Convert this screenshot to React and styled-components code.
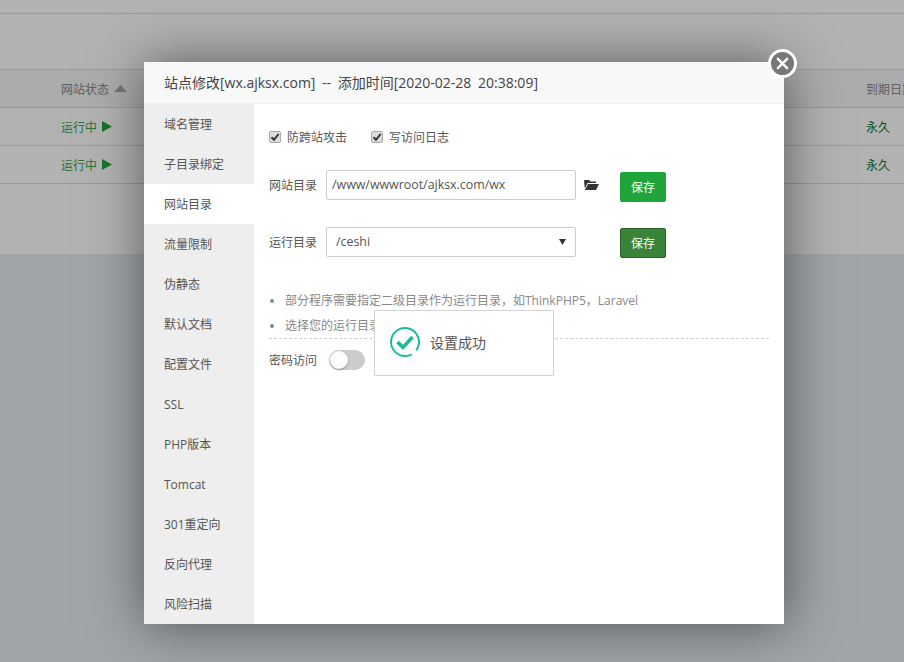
import React from "react";
import styled, { createGlobalStyle } from "styled-components";

const FONT = `"Open Sans", "Noto Sans CJK SC", sans-serif`;

const Global = createGlobalStyle`
  html, body { margin: 0; padding: 0; height: 100%; overflow: hidden; }
  body { font-family: ${FONT}; font-size: 12px; color: #555; background: #f0f0f0; }
  * { box-sizing: border-box; }
`;

const Page = styled.div`width: 904px; height: 662px; position: relative; overflow: hidden; background: #e7edf1;`;
const Panel = styled.div`height: 254px; background: #fff; padding-top: 13px;`;
const TopRule = styled.div`height: 56px; border-top: 1px solid #ddd;`;
const Row = styled.div`
  height: 38px; border-top: 1px solid #ddd; display: flex; align-items: center; justify-content: space-between;
  padding-left: 61px; background: ${p => (p.$head ? "#f5f6fa" : "#fff")}; color: ${p => (p.$head ? "#888" : "#555")};
  &:last-of-type { border-bottom: 1px solid #ddd; height: 39px; }
`;
const Tail = styled.span`width: 38px; white-space: nowrap; color: ${p => p.$c || "inherit"};`;
const Status = styled.span`color: ${p => (p.$head ? "#888" : "#38a64c")}; display: inline-flex; align-items: center; gap: 5px;`;
const Triangle = styled.svg`display: block;`;
const Overlay = styled.div`position: absolute; inset: 0; background: rgba(0, 0, 0, 0.3);`;

const Modal = styled.div`
  position: absolute; left: 144px; top: 62px; width: 640px; height: 562px; background: #fff;
  box-shadow: 1px 1px 50px rgba(0, 0, 0, 0.5); display: flex; flex-direction: column;
`;
const Header = styled.div`
  height: 42px; flex: none; background: #f8f8f8; border-bottom: 1px solid #eee; padding: 0 20px;
  font-size: 14px; line-height: 42px; color: #444; white-space: nowrap; word-spacing: 3px;
`;
const Close = styled.button`
  position: absolute; right: -13px; top: -13px; width: 29px; height: 29px; padding: 0; border-radius: 50%;
  border: 3px solid #fff; background: #777; display: flex; align-items: center; justify-content: center;
`;
const Body = styled.div`flex: 1; display: flex; min-height: 0;`;
const Side = styled.nav`width: 110px; flex: none; background: #eee; overflow: hidden;`;
const Tab = styled.div`
  height: 40px; line-height: 42px; padding-left: 20px; color: #555; font-size: 12px;
  background: ${p => (p.$active ? "#fff" : "transparent")};
`;
const Content = styled.div`flex: 1; padding: 25px 15px 0; position: relative;`;
const Checks = styled.div`display: flex; gap: 24px; height: 16px; align-items: center;`;
const Check = styled.label`display: inline-flex; align-items: center; gap: 6px; color: #555;`;
const Box = styled.span`
  width: 12px; height: 12px; border-radius: 2px; background: #ddd; border: 1px solid #aaa;
  display: inline-flex; align-items: center; justify-content: center;
`;
const Line = styled.div`display: flex; align-items: flex-start; height: 30px; margin-top: ${p => p.$mt}px;`;
const Label = styled.span`width: 57px; flex: none; color: #555; line-height: 31px;`;
const Field = styled.div`
  width: 250px; height: 30px; border: 1px solid #ccc; border-radius: 2px; background: #fff;
  display: flex; align-items: center; justify-content: space-between; padding: ${p => (p.$select ? "0 9px 0 9px" : "0 5px")};
  color: #555; font-size: 12.4px; line-height: ${p => (p.$select ? 30 : 28)}px;
`;
const Folder = styled.svg`margin: 9px 0 0 8px; width: 15px; height: 12px; flex: none;`;
const Save = styled.button`
  margin: ${p => p.$top}px 0 0 ${p => p.$ml}px; width: 46px; height: 30px; border-radius: 2px; padding: 0;
  border: 1px solid ${p => (p.$dark ? "#2a5f2a" : "#20a53a")}; background: ${p => (p.$dark ? "#398439" : "#20a53a")};
  color: #fff; font: 12px ${FONT};
`;
const Notes = styled.ul`
  margin: 31px 0 0; padding: 0 0 0 16px; list-style: disc; color: #888; border-bottom: 1px dashed #ccc;
  li { height: 25px; line-height: 25px; white-space: nowrap; }
  li:first-child { line-height: 26px; }
  li::marker { color: #888; }
`;
const SwitchRow = styled.div`display: flex; align-items: center; height: 20px; margin-top: 11px; gap: 12px;`;
const Switch = styled.span`
  width: 36px; height: 20px; border-radius: 10px; background: #ccc; position: relative; display: block;
  &::before { content: ""; position: absolute; left: 1px; top: 1px; width: 18px; height: 18px; border-radius: 50%; background: #fff; box-shadow: 0 1px 2px rgba(0,0,0,.35); }
`;
const Toast = styled.div`
  position: absolute; left: 120px; top: 206px; width: 180px; height: 66px; background: #fff; border: 1px solid #d3d3d3;
  display: flex; align-items: center; gap: 10px; padding: 0 0 2px 15px; color: #555; font-size: 14px; border-radius: 1px;
`;
const ToastIcon = styled.svg`display: block;`;

const Play = () => <Triangle width="10" height="11" viewBox="0 0 10 11"><path d="M0 0 L10 5.5 L0 11Z" fill="#20a53a" /></Triangle>;

const tabs = ["域名管理", "子目录绑定", "网站目录", "流量限制", "伪静态", "默认文档", "配置文件", "SSL", "PHP版本", "Tomcat", "301重定向", "反向代理", "风险扫描"];

function Tick() {
  return <Box><svg width="10" height="10" viewBox="0 0 10 10"><path d="M1.5 5.2 L4 7.8 L8.6 2" fill="none" stroke="#333" strokeWidth="2" /></svg></Box>;
}

export default function App() {
  return (
    <Page>
      <Global />
      <Panel>
        <TopRule />
        <Row $head>
          <Status $head>网站状态 <Triangle width="13" height="7" viewBox="0 0 13 7"><path d="M6.5 0 L13 7 L0 7Z" fill="#aaa" /></Triangle></Status>
          <Tail>到期日期</Tail>
        </Row>
        <Row><Status>运行中 <Play /></Status><Tail $c="#0a7a2a">永久</Tail></Row>
        <Row><Status>运行中 <Play /></Status><Tail $c="#0a7a2a">永久</Tail></Row>
      </Panel>
      <Overlay />
      <Modal>
        <Header>站点修改[wx.ajksx.com] -- 添加时间[2020-02-28 20:38:09]</Header>
        <Close aria-label="关闭">
          <svg width="13" height="13" viewBox="0 0 14 14"><path d="M2 2 L12 12 M12 2 L2 12" stroke="#fff" strokeWidth="2.6" strokeLinecap="round" /></svg>
        </Close>
        <Body>
          <Side>
            {tabs.map(t => <Tab key={t} $active={t === "网站目录"}>{t}</Tab>)}
          </Side>
          <Content>
            <Checks>
              <Check><Tick />防跨站攻击</Check>
              <Check><Tick />写访问日志</Check>
            </Checks>
            <Line $mt={25}>
              <Label>网站目录</Label>
              <Field>/www/wwwroot/ajksx.com/wx</Field>
              <Folder viewBox="0 0 15 12"><path d="M0 2 Q0 1 1 1 L5 1 L6.5 2.5 L12 2.5 L12 4 L3.5 4 L0.8 9.5Z M4 5 L15 5 L12 11 L0.8 11Z" fill="#333" /></Folder>
              <Save $ml={21} $top={2}>保存</Save>
            </Line>
            <Line $mt={27}>
              <Label>运行目录</Label>
              <Field $select><span>/ceshi</span><svg width="7" height="6" viewBox="0 0 7 6"><path d="M0 0 L7 0 L3.5 6Z" fill="#333" /></svg></Field>
              <Save $ml={44} $dark $top={1}>保存</Save>
            </Line>
            <Notes>
              <li>部分程序需要指定二级目录作为运行目录，如ThinkPHP5，Laravel</li>
              <li>选择您的运行目录，点保存即可</li>
            </Notes>
            <SwitchRow><span>密码访问</span><Switch /></SwitchRow>
            <Toast>
              <ToastIcon width="30" height="30" viewBox="0 0 30 30">
                <circle cx="15" cy="15" r="14" fill="none" stroke="#1abc9c" strokeWidth="2" strokeDasharray="72 6" transform="rotate(100 15 15)" />
                <path d="M7.5 15 L13 20.5 L22.5 10" fill="none" stroke="#1abc9c" strokeWidth="3.6" />
              </ToastIcon>
              设置成功
            </Toast>
          </Content>
        </Body>
      </Modal>
    </Page>
  );
}
